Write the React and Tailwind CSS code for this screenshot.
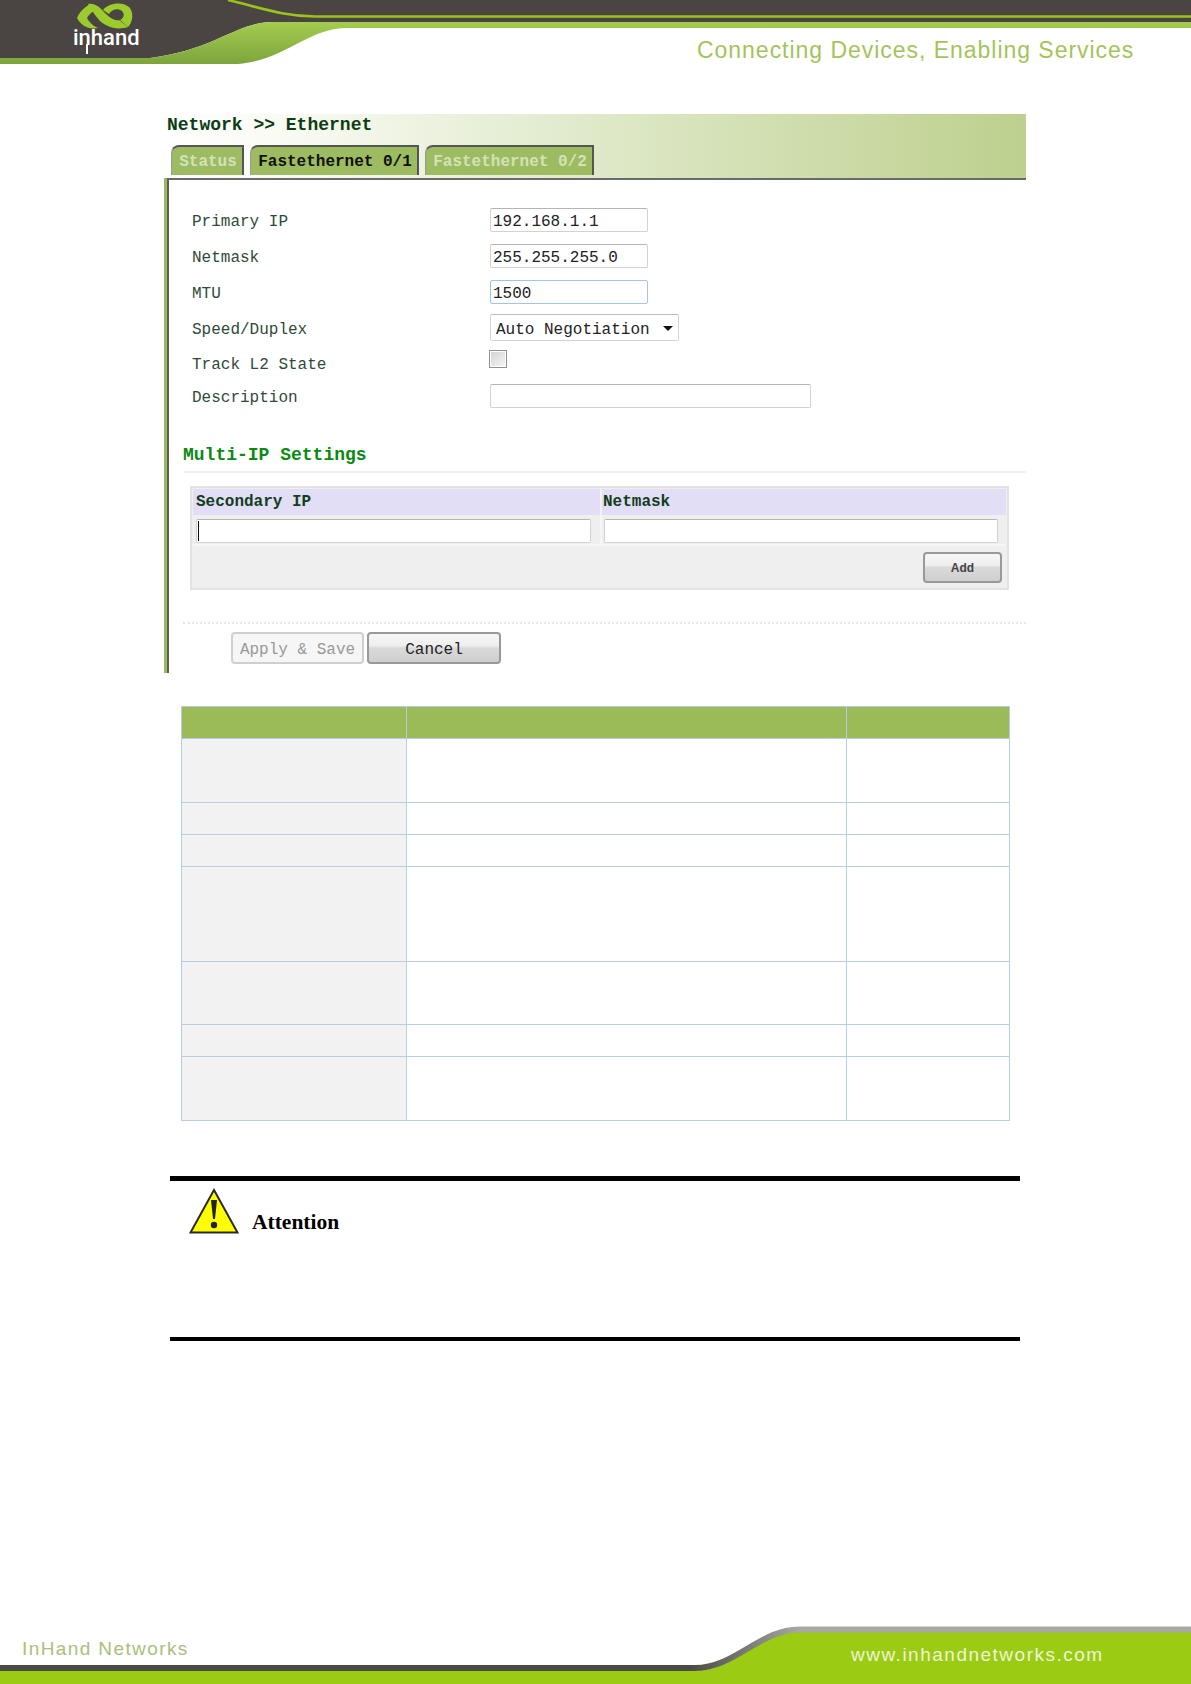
const mono = "font-['Liberation_Mono',monospace]";

function Header() {
  return (
    <div className="relative h-[64px] shrink-0">
      <svg width="1191" height="64" viewBox="0 0 1191 64" className="block">
        <defs>
          <linearGradient id="swell" x1="0" y1="22" x2="0" y2="64" gradientUnits="userSpaceOnUse">
            <stop offset="0" stopColor="#a4cc50" />
            <stop offset="1" stopColor="#7da53c" />
          </linearGradient>
        </defs>
        <path d="M0 0H1191V22H272C235 23 215 50 150 58H0Z" fill="#4a4543" />
        <path d="M0 58H150C215 50 235 23 272 22H1191V28H345C305 30 285 60 238 64H0Z" fill="url(#swell)" />
        <path d="M228 0C262 8 282 16 315 16.500H1191" fill="none" stroke="#9bc31c" strokeWidth="2.500" />
        {/* logo mark */}
        <path d="M77 18C80 11 85 7 90 4L97 9C91 12 88 16 87 18C89 22 93 26 98 28C88 30 81 25 77 18Z" fill="#9ccb2e" />
        <path d="M88 4C96 3 100 8 105 13C110 18 115 21 119 20L128 27C115 31 106 26 100 21C95 16 92 10 88 4Z" fill="#9ccb2e" />
        <path d="M103 10C108 3 122 1 129 7C134 12 133 22 128 27L120 20C124 18 125 14 122 11C118 8 112 9 109 14Z" fill="#9ccb2e" />
        <path d="M87 44V54" stroke="#fff" strokeWidth="2" />
      </svg>
      <span className="absolute left-[73px] top-[26px] font-['Roboto',sans-serif] font-medium text-[22px] leading-[24px] text-white">inhand</span>
      <span className="absolute left-[697px] top-[36px] font-['Liberation_Sans',sans-serif] text-[23px] leading-[28px] tracking-[0.970px] text-[#a3c45a] whitespace-nowrap">Connecting Devices, Enabling Services</span>
    </div>
  );
}

function Tab({ label, active, className }) {
  return (
    <div className={`h-[30px] flex items-center justify-center rounded-tl-lg border-t-2 border-r-2 border-l border-t-[#555] border-r-[#555] border-l-[#999] bg-[#9dbb61] pt-[2px] pl-[2px] text-[16px] font-bold ${active ? 'text-[#111]' : 'text-[#d3e2b8]'} ${className}`}>
      {label}
    </div>
  );
}

function Field({ label, className, children }) {
  return (
    <div className={`flex items-center ${className}`}>
      <div className="w-[298px] pt-[4px] text-[16px] leading-[20px] text-[#2f4a38]">{label}</div>
      {children}
    </div>
  );
}

function TextInput({ value, blue, className }) {
  return (
    <input
      readOnly
      value={value}
      className={`h-[24px] rounded-[2px] border px-[2px] pt-[3px] text-[16px] text-[#222] outline-none ${mono} ${blue ? 'border-[#9cc6ea]' : 'border-[#d2d2d2] border-t-[#b5b5b5]'} ${className}`}
    />
  );
}

function GrayButton({ children, className }) {
  return (
    <button className={`rounded-[4px] border-2 border-[#999999] bg-[linear-gradient(#f7f7f7_0%,#eeeeee_42%,#dadada_50%,#cfcfcf_100%)] text-[#222] ${className}`}>
      {children}
    </button>
  );
}

function Panel() {
  return (
    <section className={`ml-[164px] mt-[50px] w-[862px] ${mono}`}>
      <div className="h-[64px] pt-[1px] bg-[linear-gradient(90deg,#ffffff_0%,#f8faf2_15%,#dfe9c9_50%,#bdd08e_100%)]">
        <div className="ml-[3px] h-[20px] text-[18px] leading-[20px] font-bold text-[#0c3d14]">Network &gt;&gt; Ethernet</div>
        <div className="mt-[10px] ml-[7px] flex">
          <Tab label="Status" className="w-[73px]" />
          <Tab label="Fastethernet 0/1" active className="ml-[6px] w-[169px]" />
          <Tab label="Fastethernet 0/2" className="ml-[6px] w-[169px]" />
        </div>
      </div>
      <div className="h-[495px] border-l-[3px] border-l-[#9cb85c]">
        <div className="h-full border-l-2 border-t-2 border-l-[#5c5c5c] border-t-[#6a6a6a] pt-[28px]">
          <div className="pl-[23px]">
            <Field label="Primary IP"><TextInput value="192.168.1.1" className="w-[158px]" /></Field>
            <Field label="Netmask" className="mt-[12px]"><TextInput value="255.255.255.0" className="w-[158px]" /></Field>
            <Field label="MTU" className="mt-[12px]"><TextInput value="1500" blue className="w-[158px]" /></Field>
            <Field label="Speed/Duplex" className="mt-[10px]">
              <div className="relative h-[27px] w-[189px] rounded-[2px] border border-[#d4d4d4] border-t-[#bdbdbd] pl-[5px] pt-[3px] text-[16px] leading-[25px] text-[#222]">
                Auto Negotiation
                <svg width="10" height="5" viewBox="0 0 10 5" className="absolute right-[5px] top-[11px]"><path d="M0 0H10L5 5Z" fill="#111" /></svg>
              </div>
            </Field>
            <Field label="Track L2 State" className="mt-[10px]">
              <div className="flex h-[18px] w-[18px] -ml-[1px] -translate-y-[4px] items-center justify-center border border-[#8f8f8f] bg-white">
                <div className="h-[14px] w-[14px] bg-[linear-gradient(135deg,#d4d4d4,#f5f5f5)]" />
              </div>
            </Field>
            <Field label="Description" className="mt-[9px]"><TextInput value="" className="w-[321px]" /></Field>
          </div>

          <div className="ml-[14px] mt-[35px] text-[18px] leading-[24px] font-bold text-[#0a8a12]">Multi-IP Settings</div>
          <div className="ml-[14px] mt-[4px] h-[2px] bg-[#f0f0f0]" />

          <div className="ml-[21px] mt-[13px] h-[104px] w-[819px] border-2 border-[#e2e2e2] bg-[#efefef] p-[1px]">
            <div className="grid h-[26px] grid-cols-[407px_1fr] bg-[#e2def5] text-[16px] font-bold leading-[26px] text-[#133d1c]">
              <div className="pl-[3px]">Secondary IP</div>
              <div className="border-l-2 border-[#f2f2f2] pl-[1px]">Netmask</div>
            </div>
            <div className="grid h-[31px] grid-cols-[407px_1fr] border-b-2 border-b-[#f6f6f6]">
              <div className="relative pl-[3px] pt-[4px]">
                <TextInput value="" className="block w-[395px] bg-white" />
                <div className="absolute left-[5px] top-[6px] h-[20px] w-[1px] bg-[#111]" />
              </div>
              <div className="border-l-2 border-[#f6f6f6] pl-[2px] pt-[4px]">
                <TextInput value="" className="block w-[394px] bg-white" />
              </div>
            </div>
            <div className="flex justify-end pt-[6px] pr-[4px]">
              <GrayButton className="h-[31px] w-[79px] font-['Liberation_Sans',sans-serif] text-[12px] font-bold !text-[#444]">Add</GrayButton>
            </div>
          </div>

          <div className="ml-[14px] mt-[32px] border-t-2 border-dotted border-[#e6e6e6]" />
          <div className="ml-[62px] mt-[8px] flex gap-[3px] text-[16px]">
            <button className="h-[32px] w-[133px] rounded-[4px] border-2 border-[#cfcfcf] bg-[#f6f6f6] pt-[3px] text-[#999]">Apply &amp; Save</button>
            <GrayButton className="h-[32px] w-[134px] pt-[3px]">Cancel</GrayButton>
          </div>
        </div>
      </div>
    </section>
  );
}

const ROWS = [64, 32, 32, 95, 63, 32, 64];

function ParamTable() {
  return (
    <table className="ml-[181px] mt-[33px] w-[828px] table-fixed border-collapse">
      <colgroup>
        <col className="w-[225px]" />
        <col className="w-[440px]" />
        <col className="w-[163px]" />
      </colgroup>
      <tbody>
        <tr className="h-[32px] bg-[#9bbb59]">
          <td className="border border-[#b8cce4]" />
          <td className="border border-[#b8cce4]" />
          <td className="border border-[#b8cce4]" />
        </tr>
        {ROWS.map((h, i) => (
          <tr key={i} style={{ height: h }}>
            <td className="border border-[#b8cce4] bg-[#f2f2f2]" />
            <td className="border border-[#b8cce4]" />
            <td className="border border-[#b8cce4]" />
          </tr>
        ))}
      </tbody>
    </table>
  );
}

function Attention() {
  return (
    <div className="ml-[170px] mt-[55px] h-[165px] w-[850px] border-t-[5px] border-b-4 border-black">
      <div className="ml-[19px] mt-[7px] flex items-end">
        <svg width="50" height="46" viewBox="0 0 50 46">
          <path d="M25 2L48.500 44.500H1.500Z" fill="#ffff00" stroke="#2a2a2a" strokeWidth="2" strokeLinejoin="miter" />
          <path d="M22 12H28L26 31H24Z" fill="#222" />
          <circle cx="25" cy="37" r="3.200" fill="#222" />
        </svg>
        <div className="ml-[13px] font-['Liberation_Serif',serif] text-[21.500px] leading-[24px] font-bold text-black">Attention</div>
      </div>
    </div>
  );
}

function Footer() {
  return (
    <div className="relative mt-auto h-[60px] shrink-0">
      <svg width="1191" height="60" viewBox="0 0 1191 60" className="block">
        <defs>
          <linearGradient id="foot" x1="690" y1="0" x2="800" y2="0" gradientUnits="userSpaceOnUse">
            <stop offset="0" stopColor="#4b4b45" />
            <stop offset="1" stopColor="#a8a8a4" />
          </linearGradient>
        </defs>
        <path d="M0 47H695C735 47 760 7 800 7H1191V60H0Z" fill="#9bcb12" />
        <path d="M0 44H695C735 44 760 5 800 5.500H1191" fill="none" stroke="url(#foot)" strokeWidth="6" />
      </svg>
      <span className="absolute left-[22px] top-[14px] font-['Liberation_Sans',sans-serif] text-[19px] leading-[22px] tracking-[1.400px] text-[#a9c07c] whitespace-nowrap">InHand Networks</span>
      <span className="absolute left-[851px] top-[20px] font-['Liberation_Sans',sans-serif] text-[19px] leading-[22px] tracking-[1.500px] text-[#edf5d8] whitespace-nowrap">www.inhandnetworks.com</span>
    </div>
  );
}

export default function App() {
  return (
    <div className="flex h-[1684px] w-[1191px] flex-col overflow-hidden bg-white">
      <Header />
      <Panel />
      <ParamTable />
      <Attention />
      <Footer />
    </div>
  );
}
